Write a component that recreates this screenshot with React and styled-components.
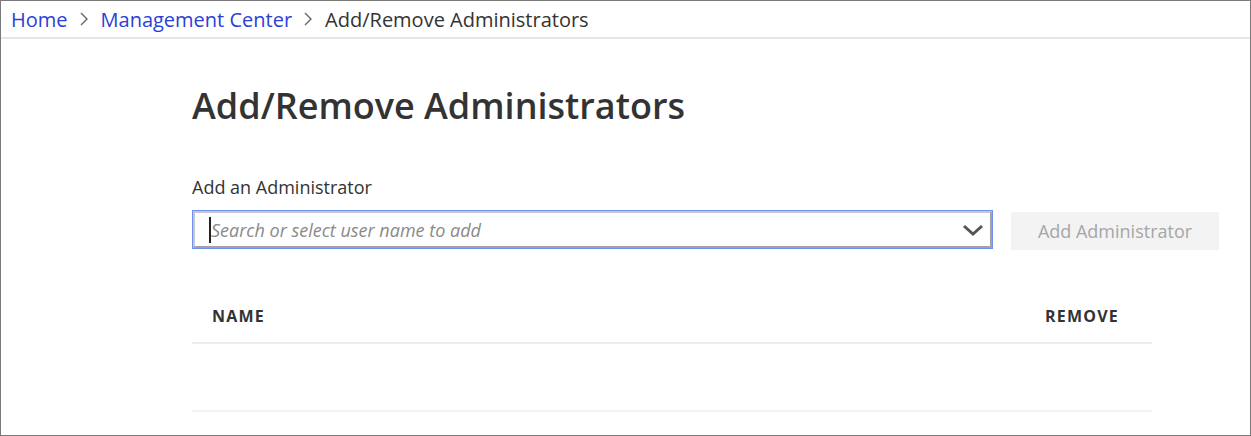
import React from "react";
import styled, { createGlobalStyle } from "styled-components";

const GlobalStyle = createGlobalStyle`
    html, body {
        margin: 0;
        padding: 0;
        background: #fff;
    }
    body {
        font-family: "Open Sans", "Noto Sans", sans-serif;
        color: #333;
    }
`;

const Frame = styled.div`
    width: 1251px;
    height: 436px;
    box-sizing: border-box;
    border: 1px solid #7a7a7a;
    overflow: hidden;
`;

const Breadcrumb = styled.nav`
    height: 38px;
    box-sizing: border-box;
    border-bottom: 2px solid #e6e6e6;
    display: flex;
    align-items: center;
    padding-left: 10px;
    font-size: 20px;
`;

const Crumb = styled.a`
    color: ${(p) => (p.current ? "#333" : "#2b40d6")};
    text-decoration: none;
`;

const Sep = styled.span`
    display: flex;
    align-items: center;
    margin: 0 12px 0 11px;
`;

const Content = styled.main`
    padding-left: 191px;
`;

const Title = styled.h1`
    margin: 44px 0 0;
    font-size: 36px;
    font-weight: 600;
    line-height: 46px;
    color: #333;
`;

const Label = styled.div`
    margin-top: 46px;
    font-size: 18px;
    line-height: 24px;
    color: #333;
`;

const PickerRow = styled.div`
    margin-top: 11px;
    display: flex;
    align-items: flex-start;
    gap: 18px;
`;

const Picker = styled.div`
    width: 801px;
    height: 39px;
    box-sizing: border-box;
    border: 1px solid #6f90f3;
    display: flex;
`;

const PickerInner = styled.div`
    flex: 1;
    display: flex;
    align-items: center;
    border: 2px solid #a3a3a3;
    border-top-color: #c8c8c8;
    border-left-color: #c8c8c8;
    padding: 0 6px 0 14px;
`;

const Caret = styled.span`
    width: 2px;
    height: 26px;
    background: #222;
`;

const Placeholder = styled.span`
    flex: 1;
    font-style: italic;
    font-size: 18px;
    color: #8a8a8a;
`;

const Button = styled.button`
    margin-top: 2px;
    width: 208px;
    height: 38px;
    border: none;
    background: #f3f3f3;
    color: #a6a6a6;
    font-family: "Open Sans", "Noto Sans", sans-serif;
    font-size: 18px;
`;

const Table = styled.div`
    width: 960px;
    margin-top: 44px;
`;

const HeadRow = styled.div`
    display: flex;
    justify-content: space-between;
    align-items: center;
    height: 50px;
    box-sizing: border-box;
    padding: 0 33px 4px 20px;
    border-bottom: 2px solid #ececec;
`;

const HeadCell = styled.span`
    font-size: 16px;
    font-weight: 700;
    letter-spacing: 1.2px;
    color: #333;
`;

const EmptyRow = styled.div`
    height: 66px;
    border-bottom: 2px solid #f3f3f3;
`;

const Chevron = ({ size = 10, color = "#666" }) => (
    <svg width={size} height={size * 1.6} viewBox="0 0 10 16">
        <polyline points="2,2 8,8 2,14" fill="none" stroke={color} strokeWidth="1.4" />
    </svg>
);

const DropArrow = () => (
    <svg width="22" height="14" viewBox="0 0 22 14">
        <polyline points="2,3 11,11 20,3" fill="none" stroke="#555" strokeWidth="3" />
    </svg>
);

export default function App() {
    return (
        <Frame>
            <GlobalStyle />
            <Breadcrumb>
                <Crumb href="#">Home</Crumb>
                <Sep><Chevron /></Sep>
                <Crumb href="#">Management Center</Crumb>
                <Sep><Chevron /></Sep>
                <Crumb current>Add/Remove Administrators</Crumb>
            </Breadcrumb>
            <Content>
                <Title>Add/Remove Administrators</Title>
                <Label>Add an Administrator</Label>
                <PickerRow>
                    <Picker>
                        <PickerInner>
                            <Caret />
                            <Placeholder>Search or select user name to add</Placeholder>
                            <DropArrow />
                        </PickerInner>
                    </Picker>
                    <Button disabled>Add Administrator</Button>
                </PickerRow>
                <Table>
                    <HeadRow>
                        <HeadCell>NAME</HeadCell>
                        <HeadCell>REMOVE</HeadCell>
                    </HeadRow>
                    <EmptyRow />
                </Table>
            </Content>
        </Frame>
    );
}
